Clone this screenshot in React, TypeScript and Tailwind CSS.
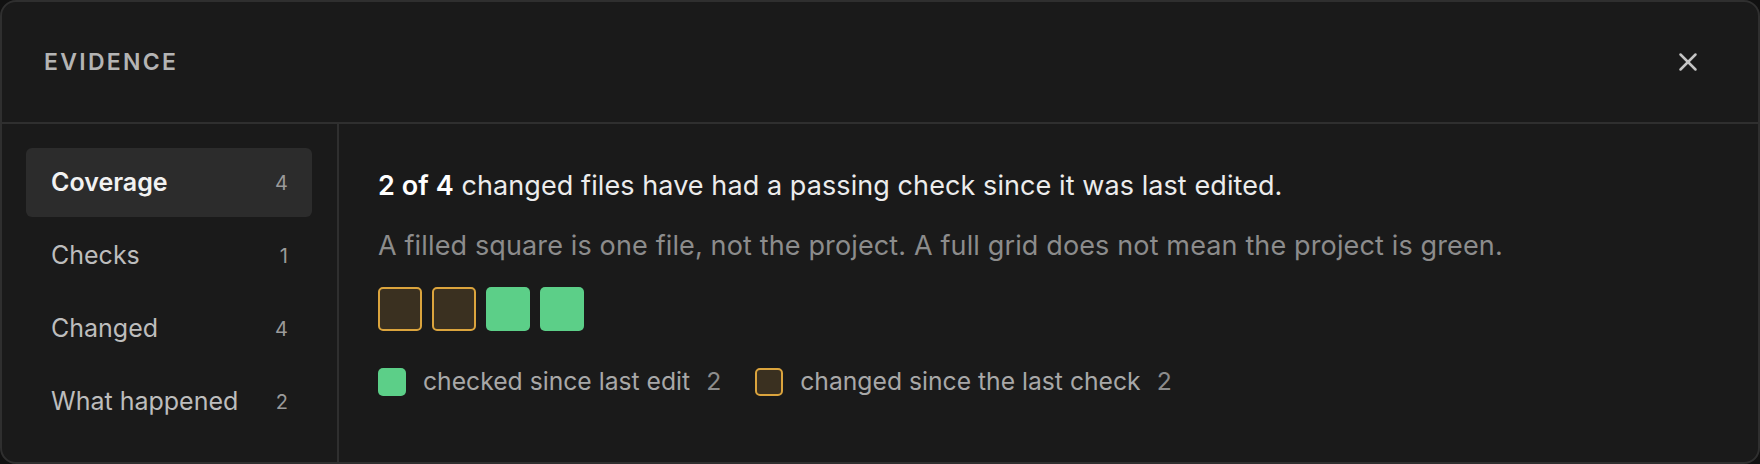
import { X } from 'lucide-react';

const tabs = [
  { label: 'Coverage', count: 4, active: true },
  { label: 'Checks', count: 1 },
  { label: 'Changed', count: 4 },
  { label: 'What happened', count: 2 },
];

// 'stale' = changed since the last check, 'ok' = checked since last edit
const files: Array<'stale' | 'ok'> = ['stale', 'stale', 'ok', 'ok'];

function Cell({ kind, size }: { kind: 'stale' | 'ok'; size: 'lg' | 'sm' }) {
  const dims = size === 'lg' ? 'h-[44px] w-[44px] rounded-[5px]' : 'h-[28px] w-[28px] rounded-[5px]';
  return kind === 'ok' ? (
    <span className={`block ${dims} bg-[#5ccf88]`} />
  ) : (
    <span className={`block ${dims} border-2 border-[#dba43d] bg-[#3a3020]`} />
  );
}

export default function App() {
  return (
    <div className="h-[464px] w-[1760px] bg-[#111111] font-['Inter',sans-serif]">
      <div className="flex h-full flex-col overflow-hidden rounded-[16px] border-2 border-[#2f2f2f] bg-[#1a1a1a]">
        <header className="flex h-[122px] shrink-0 items-center justify-between border-b-2 border-[#2f2f2f] pl-[42px] pr-[50px]">
          <h2 className="text-[23px] font-semibold uppercase tracking-[0.1em] text-[#b4b4b4]">Evidence</h2>
          <button className="flex h-[40px] w-[40px] items-center justify-center text-[#c4c4c4]">
            <X className="h-[30px] w-[30px]" strokeWidth={2} />
          </button>
        </header>

        <div className="flex flex-1">
          <nav className="flex w-[337px] shrink-0 flex-col gap-[4px] border-r-2 border-[#2f2f2f] pl-[24px] pr-[25px] pt-[24px]">
            {tabs.map((tab) => (
              <div
                key={tab.label}
                className={`flex h-[69px] items-center justify-between rounded-[6px] pl-[25px] pr-[24px] ${
                  tab.active ? 'bg-[#2c2c2c]' : ''
                }`}
              >
                <span
                  className={`text-[25px] ${tab.active ? 'font-semibold text-[#f2f2f2]' : 'text-[#bdbdbd]'}`}
                >
                  {tab.label}
                </span>
                <span className="text-[20px] text-[#9a9a9a]">{tab.count}</span>
              </div>
            ))}
          </nav>

          <main className="flex-1 pl-[39px] pt-[44px]">
            <p className="text-[27px] leading-[36px] tracking-[0.003em] text-[#ececec]">
              <span className="font-semibold text-white">2 of 4</span> changed files have had a passing check since it
              was last edited.
            </p>
            <p className="mt-[24px] text-[27px] leading-[36px] tracking-[0.005em] text-[#8c8c8c]">
              A filled square is one file, not the project. A full grid does not mean the project is green.
            </p>

            <div className="mt-[23px] flex gap-[10px]">
              {files.map((f, i) => (
                <Cell key={i} kind={f} size="lg" />
              ))}
            </div>

            <div className="mt-[32px] flex items-center text-[24.7px] text-[#a8a8a8]">
              <Cell kind="ok" size="sm" />
              <span className="ml-[17px]">checked since last edit</span>
              <span className="ml-[16px] text-[#8c8c8c]">2</span>
              <span className="ml-[34px]">
                <Cell kind="stale" size="sm" />
              </span>
              <span className="ml-[17px]">changed since the last check</span>
              <span className="ml-[16px] text-[#8c8c8c]">2</span>
            </div>
          </main>
        </div>
      </div>
    </div>
  );
}
